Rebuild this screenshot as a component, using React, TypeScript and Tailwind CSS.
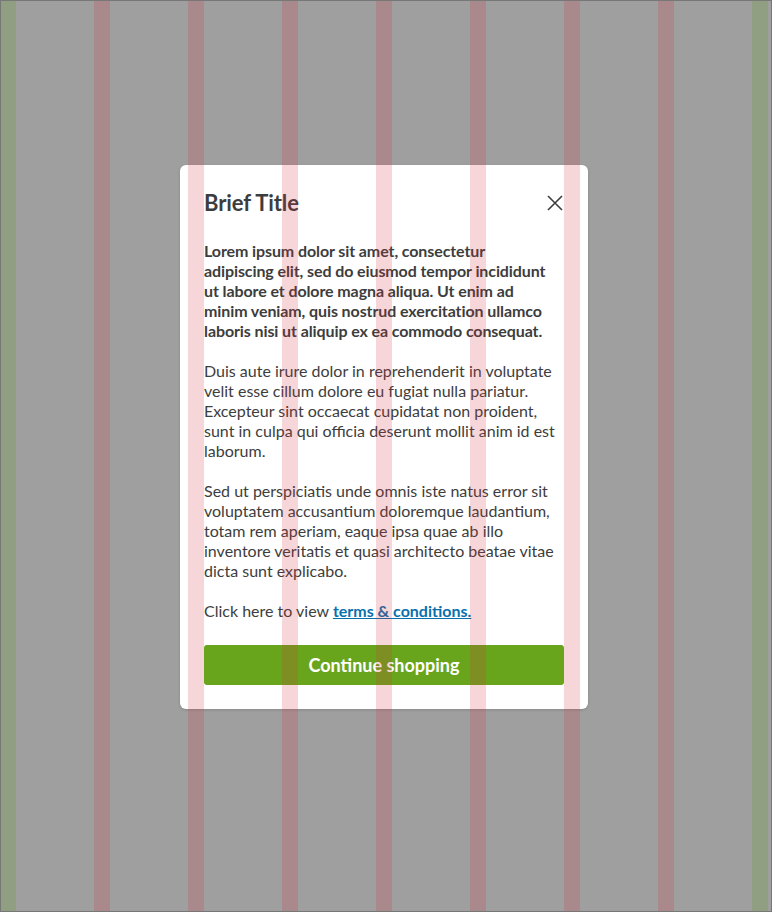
import React from "react";

const font = { fontFamily: "Lato, 'Noto Sans', sans-serif" };

function GridOverlay() {
  const cols = [0, 1, 2, 3, 4, 5, 6];
  return (
    <div className="pointer-events-none absolute inset-0 z-10 flex">
      <div className="w-[15px] shrink-0 bg-[#909f82]" />
      {cols.map((c) => (
        <React.Fragment key={c}>
          <div className="w-[78px] shrink-0" />
          <div className="w-[16px] shrink-0 bg-[rgba(210,50,60,0.2)]" />
        </React.Fragment>
      ))}
      <div className="w-[78px] shrink-0" />
      <div className="w-[16px] shrink-0 bg-[#909f82]" />
    </div>
  );
}

export default function App() {
  return (
    <div
      className="relative h-[912px] w-[772px] overflow-hidden border border-[#777777] bg-[#9f9f9f]"
      style={font}
    >
      <GridOverlay />
      <div className="flex justify-center pl-[15px] pr-[19px] pt-[164px]">
        <div className="w-[408px] rounded-[6px] bg-white p-6 text-[#3d3d3d] shadow-[0_1px_3px_rgba(0,0,0,0.15)]">
          <div className="flex h-7 items-center justify-between">
            <h2 className="text-[22px] font-bold leading-7 tracking-[-0.1px]">Brief Title</h2>
            <svg width="16" height="16" viewBox="0 0 16 16" className="mr-[1px]">
              <path d="M1 1 L15 15 M15 1 L1 15" stroke="#3d3d3d" strokeWidth="1.6" fill="none" />
            </svg>
          </div>
          <div className="mt-6 whitespace-nowrap text-[16px] leading-5">
            <p className="font-bold tracking-[-0.1px]">
              Lorem ipsum dolor sit amet, consectetur
              <br />
              adipiscing elit, sed do eiusmod tempor incididunt
              <br />
              ut labore et dolore magna aliqua. Ut enim ad
              <br />
              minim veniam, quis nostrud exercitation ullamco
              <br />
              laboris nisi ut aliquip ex ea commodo consequat.
            </p>
            <p className="mt-5">
              Duis aute irure dolor in reprehenderit in voluptate
              <br />
              velit esse cillum dolore eu fugiat nulla pariatur.
              <br />
              Excepteur sint occaecat cupidatat non proident,
              <br />
              sunt in culpa qui officia deserunt mollit anim id est
              <br />
              laborum.
            </p>
            <p className="mt-5">
              Sed ut perspiciatis unde omnis iste natus error sit
              <br />
              voluptatem accusantium doloremque laudantium,
              <br />
              totam rem aperiam, eaque ipsa quae ab illo
              <br />
              inventore veritatis et quasi architecto beatae vitae
              <br />
              dicta sunt explicabo.
            </p>
            <p className="mt-5">
              Click here to view{" "}
              <a href="#" className="font-bold text-[#0a70ad] underline">
                terms &amp; conditions.
              </a>
            </p>
          </div>
          <button className="mt-6 flex h-10 w-full items-center justify-center rounded-[3px] bg-[#68a51d] text-[18px] font-bold text-white">
            Continue shopping
          </button>
        </div>
      </div>
    </div>
  );
}
